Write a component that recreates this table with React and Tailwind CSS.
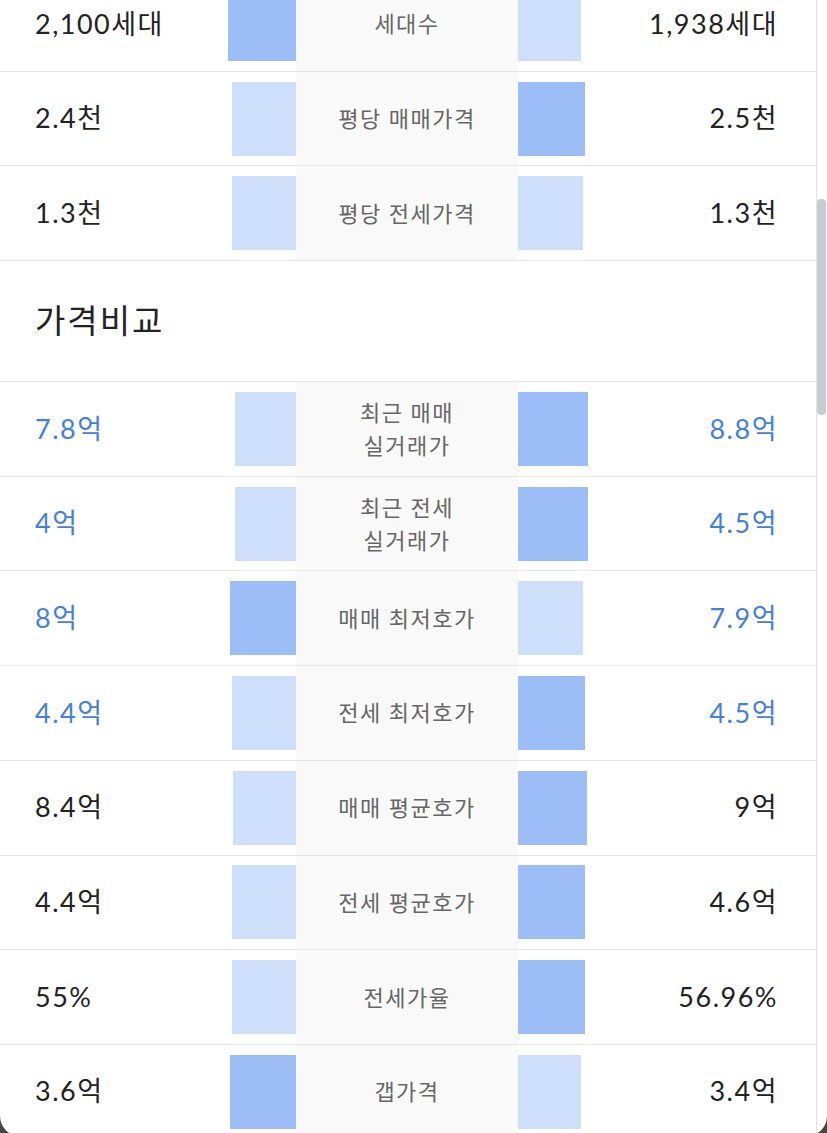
const DARK = 'bg-[#9dbdf6]';
const LIGHT = 'bg-[#cddffb]';

const topRows = [
  { left: '2,100세대', lw: 68, ld: true, label: ['세대수'], rw: 63, rd: false, right: '1,938세대' },
  { left: '2.4천', lw: 64, ld: false, label: ['평당 매매가격'], rw: 67, rd: true, right: '2.5천' },
  { left: '1.3천', lw: 64, ld: false, label: ['평당 전세가격'], rw: 65, rd: false, right: '1.3천' },
];

const priceRows = [
  { left: '7.8억', lw: 61, ld: false, label: ['최근 매매', '실거래가'], rw: 70, rd: true, right: '8.8억', blue: true },
  { left: '4억', lw: 61, ld: false, label: ['최근 전세', '실거래가'], rw: 70, rd: true, right: '4.5억', blue: true },
  { left: '8억', lw: 66, ld: true, label: ['매매 최저호가'], rw: 65, rd: false, right: '7.9억', blue: true },
  { left: '4.4억', lw: 64, ld: false, label: ['전세 최저호가'], rw: 67, rd: true, right: '4.5억', blue: true },
  { left: '8.4억', lw: 63, ld: false, label: ['매매 평균호가'], rw: 69, rd: true, right: '9억' },
  { left: '4.4억', lw: 64, ld: false, label: ['전세 평균호가'], rw: 67, rd: true, right: '4.6억' },
  { left: '55%', lw: 64, ld: false, label: ['전세가율'], rw: 67, rd: true, right: '56.96%' },
  { left: '3.6억', lw: 66, ld: true, label: ['갭가격'], rw: 63, rd: false, right: '3.4억' },
];

const CompareRow = ({ row }) => {
  const valueColor = row.blue ? 'text-[#4580dc]' : 'text-[#222]';
  return (
    <div className="grid grid-cols-[296px_222px_1fr] h-[94.7px] border-b border-[#e6e6e6]">
      <div className="flex items-center justify-between pl-[35px]">
        <span className={`text-[27px] tracking-[1.5px] ${valueColor}`}>{row.left}</span>
        <div className={`h-[74px] ${row.ld ? DARK : LIGHT}`} style={{ width: row.lw }} />
      </div>
      <div className="flex flex-col items-center justify-center bg-[#f9f9f9] text-[22px] leading-[33px] tracking-[1.5px] text-[#666]">
        {row.label.map(line => (
          <span key={line}>{line}</span>
        ))}
      </div>
      <div className="flex items-center justify-between pr-[38px]">
        <div className={`h-[74px] ${row.rd ? DARK : LIGHT}`} style={{ width: row.rw }} />
        <span className={`text-[27px] tracking-[1.5px] ${valueColor}`}>{row.right}</span>
      </div>
    </div>
  );
};

export default function App() {
  return (
    <div className="h-[1133px] overflow-hidden bg-[#4b4540] font-['Lato','Noto_Sans_CJK_KR',sans-serif]">
      <div className="flex h-[1136px] overflow-hidden rounded-b-[20px] bg-white">
        {/* Scrolled panel content */}
        <div className="flex-1 border-r border-[#e3e3e3]">
          <div className="-mt-[23px]">
            {topRows.map(row => (
              <CompareRow key={row.label.join()} row={row} />
            ))}
            <div className="flex h-[121px] items-center border-b border-[#e6e6e6] pl-[35px]">
              <h2 className="text-[33px] tracking-[2px] text-[#222]">가격비교</h2>
            </div>
            {priceRows.map(row => (
              <CompareRow key={row.label.join()} row={row} />
            ))}
          </div>
        </div>

        {/* Scrollbar */}
        <div className="w-[10px] shrink-0">
          <div className="mt-[199px] h-[216px] w-[9px] rounded-[4px] bg-[#c6cdd7]" />
        </div>
      </div>
    </div>
  );
}
